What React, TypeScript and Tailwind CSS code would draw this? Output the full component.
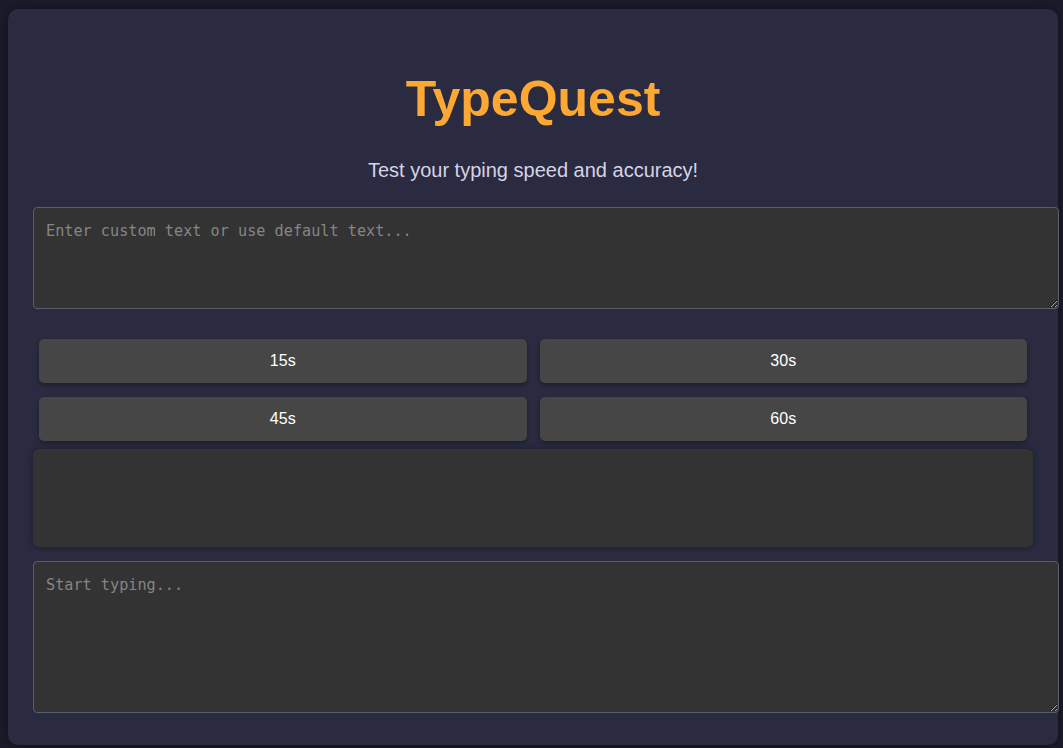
import { useState } from "react";

const durations = ["15s", "30s", "45s", "60s"];

export default function App() {
  const [custom, setCustom] = useState("");
  const [typed, setTyped] = useState("");
  const [time, setTime] = useState("30s");

  return (
    <div className="min-h-screen bg-[#1c1b2b] px-2 pt-[9px] pb-1 font-['Liberation_Sans',Arial,sans-serif]">
      <div className="w-[1050px] rounded-[10px] bg-[#2a2a40] px-[25px] pt-[25px] pb-[32px] shadow-[0_0_12px_rgba(0,0,0,0.45)]">
        {/* Header */}
        <h1 className="mt-[37px] text-center text-[50px] font-bold leading-[56px] text-[#fca833]">TypeQuest</h1>
        <p className="mt-[31px] text-center text-[20px] leading-6 text-[#d4d4e4]">Test your typing speed and accuracy!</p>

        {/* Custom text */}
        <textarea
          value={custom}
          onChange={(e) => setCustom(e.target.value)}
          placeholder="Enter custom text or use default text..."
          className="mt-[25px] box-content block h-[75px] w-[1000px] rounded-[4px] border border-[#5c5c6a] bg-[#333333] px-3 pt-[13px] pb-3 font-['DejaVu_Sans_Mono',monospace] text-[15.2px] leading-[20px] text-[#ddd] placeholder:text-[#858585] focus:outline-none"
        />

        {/* Time buttons */}
        <div className="mt-[24px] grid grid-cols-2 gap-x-[13px] gap-y-[14px] px-[6px] py-[6px]">
          {durations.map((d) => (
            <button
              key={d}
              onClick={() => setTime(d)}
              className={`h-[44px] rounded-[5px] text-[16px] text-white shadow-[0_2px_4px_rgba(0,0,0,0.3)] ${
                time === d ? "bg-[#464646]" : "bg-[#464646]"
              }`}
            >
              {d}
            </button>
          ))}
        </div>

        {/* Text display */}
        <div className="mt-[2px] h-[98px] w-[1000px] rounded-[6px] bg-[#333333] shadow-[0_0_6px_rgba(0,0,0,0.3)]" />

        {/* Typing area */}
        <textarea
          value={typed}
          onChange={(e) => setTyped(e.target.value)}
          placeholder="Start typing..."
          className="mt-[14px] box-content block h-[125px] w-[1000px] rounded-[4px] border border-[#5c5c6a] bg-[#333333] px-3 pt-[13px] pb-3 font-['DejaVu_Sans_Mono',monospace] text-[15.2px] leading-[20px] text-[#ddd] placeholder:text-[#858585] focus:outline-none"
        />
      </div>
    </div>
  );
}
